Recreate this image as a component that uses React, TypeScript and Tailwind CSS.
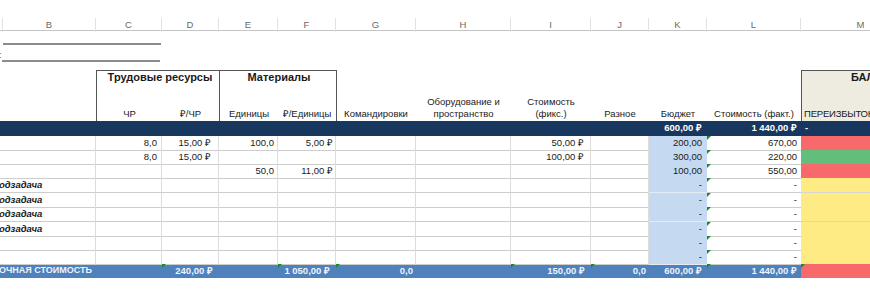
import React from 'react';

const GRID =
  'grid grid-cols-[3px_93px_66px_57px_59px_58px_80px_95px_80px_58px_58px_94px_120px]';

type Fill = 'red' | 'green' | 'yellow';

interface RowData {
  b?: string;
  c?: string;
  d?: string;
  e?: string;
  f?: string;
  i?: string;
  k: string;
  l: string;
  m: Fill;
  tall?: boolean;
}

const fillClass: Record<Fill, string> = {
  red: 'bg-[#f8696b]',
  green: 'bg-[#63be7b]',
  yellow: 'bg-[#ffeb84]',
};

const rows: RowData[] = [
  { c: '8,0', d: '15,00 ₽', e: '100,0', f: '5,00 ₽', i: '50,00 ₽', k: '200,00', l: '670,00', m: 'red' },
  { c: '8,0', d: '15,00 ₽', i: '100,00 ₽', k: '300,00', l: '220,00', m: 'green' },
  { e: '50,0', f: '11,00 ₽', k: '100,00', l: '550,00', m: 'red' },
  { b: 'одзадача', k: '-', l: '-', m: 'yellow', tall: true },
  { b: 'одзадача', k: '-', l: '-', m: 'yellow' },
  { b: 'одзадача', k: '-', l: '-', m: 'yellow', tall: true },
  { b: 'одзадача', k: '-', l: '-', m: 'yellow' },
  { k: '-', l: '-', m: 'yellow' },
  { k: '-', l: '-', m: 'yellow' },
];

const letters = ['B', 'C', 'D', 'E', 'F', 'G', 'H', 'I', 'J', 'K', 'L', 'M'];

// маленький зелёный треугольник в углу ячейки (как в Excel)
function Flag() {
  return (
    <span className="absolute top-0 left-0 w-0 h-0 border-t-[4px] border-t-[#1d8a2a] border-r-[4px] border-r-transparent" />
  );
}

function NumCell({ value, pr = 'pr-[4px]' }: { value?: string; pr?: string }) {
  return (
    <div
      className={`flex items-center justify-end ${pr} border-b border-r border-b-[#cdcdcd] border-r-[#dcdcdc] whitespace-nowrap overflow-hidden`}
    >
      {value}
    </div>
  );
}

function HeadLabel({ children, align = 'center' }: { children: React.ReactNode; align?: 'center' | 'left' }) {
  return (
    <div
      className={`flex flex-col justify-end pb-[1px] leading-[12px] ${
        align === 'center' ? 'items-center text-center' : 'items-start pl-[3px]'
      }`}
    >
      {children}
    </div>
  );
}

export default function App() {
  return (
    <div className="w-[870px] h-[297px] overflow-hidden bg-white text-[9.5px] text-[#1a1a1a] font-['Liberation_Sans',Arial,sans-serif]">
      {/* column letters */}
      <div className="h-[18px]" />
      <div className={`${GRID} h-[13px] border-b border-[#c4c4c4]`}>
        <div className="border-r border-[#e2e2e2]" />
        {letters.map((l) => (
          <div key={l} className="flex items-center justify-center text-[9.5px] text-[#6a6a6a] border-r border-[#e2e2e2]">
            {l}
          </div>
        ))}
      </div>

      {/* подписи */}
      <div className="h-[39px] flex flex-col">
        <div className="h-[2px] w-[158px] ml-[3px] mt-[12px] bg-[#8c8c8c]" />
        <div className="flex items-end mt-[5px]">
          <span className="w-[3px] text-[9px] leading-[10px] text-[#555] -ml-[1px] mb-[2px]">:</span>
          <div className="h-[2px] w-[158px] bg-[#8c8c8c]" />
        </div>
      </div>

      {/* header block */}
      <div className={`${GRID} h-[51px]`}>
        <div />
        <div />
        <div className="col-span-2 border-l border-t border-[#555] flex flex-col justify-between">
          <div className="text-center font-bold text-[11px] leading-[13px] pl-[4px]">Трудовые ресурсы</div>
          <div className="grid grid-cols-[65px_57px]">
            <HeadLabel>ЧР</HeadLabel>
            <HeadLabel>₽/ЧР</HeadLabel>
          </div>
        </div>
        <div className="col-span-2 border-l border-t border-r border-[#555] flex flex-col justify-between -mr-[1px]">
          <div className="text-center font-bold text-[11px] leading-[13px] pl-[2px]">Материалы</div>
          <div className="grid grid-cols-[58px_58px]">
            <HeadLabel>Единицы</HeadLabel>
            <HeadLabel>₽/Единицы</HeadLabel>
          </div>
        </div>
        <HeadLabel>Командировки</HeadLabel>
        <HeadLabel>
          <span>Оборудование и</span>
          <span>пространство</span>
        </HeadLabel>
        <HeadLabel>
          <span>Стоимость</span>
          <span>(фикс.)</span>
        </HeadLabel>
        <HeadLabel>Разное</HeadLabel>
        <HeadLabel>Бюджет</HeadLabel>
        <HeadLabel>Стоимость (факт.)</HeadLabel>
        <div className="bg-[#eeece1] border-l border-t border-[#555] flex flex-col justify-between">
          <div className="font-bold text-[11px] leading-[13px] pl-[49px] whitespace-nowrap">БАЛАНС</div>
          <div className="pl-[2px] pb-[1px] leading-[12px] whitespace-nowrap tracking-[-0.2px]">ПЕРЕИЗБЫТОК</div>
        </div>
      </div>

      {/* navy summary bar */}
      <div className={`${GRID} h-[15px] bg-[#17375e] text-white font-bold`}>
        <div className="col-span-10" />
        <div className="flex items-center justify-end pr-[5px] whitespace-nowrap">600,00 ₽</div>
        <div className="flex items-center justify-end pr-[4px] whitespace-nowrap">1 440,00 ₽</div>
        <div className="flex items-center pl-[4px]">-</div>
      </div>

      {/* data rows */}
      {rows.map((r, idx) => (
        <div key={idx} className={`${GRID} ${r.tall ? 'h-[15px]' : 'h-[14px]'}`}>
          <div className="col-span-2 flex items-center border-b border-r border-b-[#cdcdcd] border-r-[#dcdcdc] overflow-hidden whitespace-nowrap">
            {r.b && <span className="font-bold italic -ml-[1px]">{r.b}</span>}
          </div>
          <NumCell value={r.c} />
          <NumCell value={r.d} pr="pr-[7px]" />
          <NumCell value={r.e} pr="pr-[3px]" />
          <NumCell value={r.f} pr="pr-[2px]" />
          <NumCell />
          <NumCell />
          <NumCell value={r.i} pr="pr-[6px]" />
          <NumCell />
          <div className="flex items-center justify-end pr-[5px] bg-[#c5d9f1] border-b border-[#e4ebf5]">{r.k}</div>
          <div className="relative flex items-center justify-end pr-[4px] border-b border-[#cdcdcd]">
            <Flag />
            {r.l}
          </div>
          <div className={`${fillClass[r.m]} border-b border-[#d6d6d6]`} />
        </div>
      ))}

      {/* total row */}
      <div className={`${GRID} h-[14px] bg-[#4f81bd] text-[#eef3fa] font-bold`}>
        <div className="col-span-2 flex items-center overflow-hidden whitespace-nowrap">
          <span className="-ml-[1px] text-[9px]">ОЧНАЯ СТОИМОСТЬ</span>
        </div>
        <div />
        <div className="relative flex items-center justify-end pr-[6px] whitespace-nowrap">
          <Flag />
          240,00 ₽
        </div>
        <div />
        <div className="relative flex items-center justify-end pr-[6px] whitespace-nowrap">
          <Flag />
          1 050,00 ₽
        </div>
        <div className="relative flex items-center justify-end pr-[3px]">
          <Flag />
          0,0
        </div>
        <div />
        <div className="relative flex items-center justify-end pr-[6px] whitespace-nowrap">
          <Flag />
          150,00 ₽
        </div>
        <div className="relative flex items-center justify-end pr-[3px]">
          <Flag />
          0,0
        </div>
        <div className="flex items-center justify-end pr-[5px] whitespace-nowrap">600,00 ₽</div>
        <div className="relative flex items-center justify-end pr-[4px] whitespace-nowrap">
          <Flag />
          1 440,00 ₽
        </div>
        <div className="relative bg-[#f8696b]">
          <Flag />
        </div>
      </div>
    </div>
  );
}
